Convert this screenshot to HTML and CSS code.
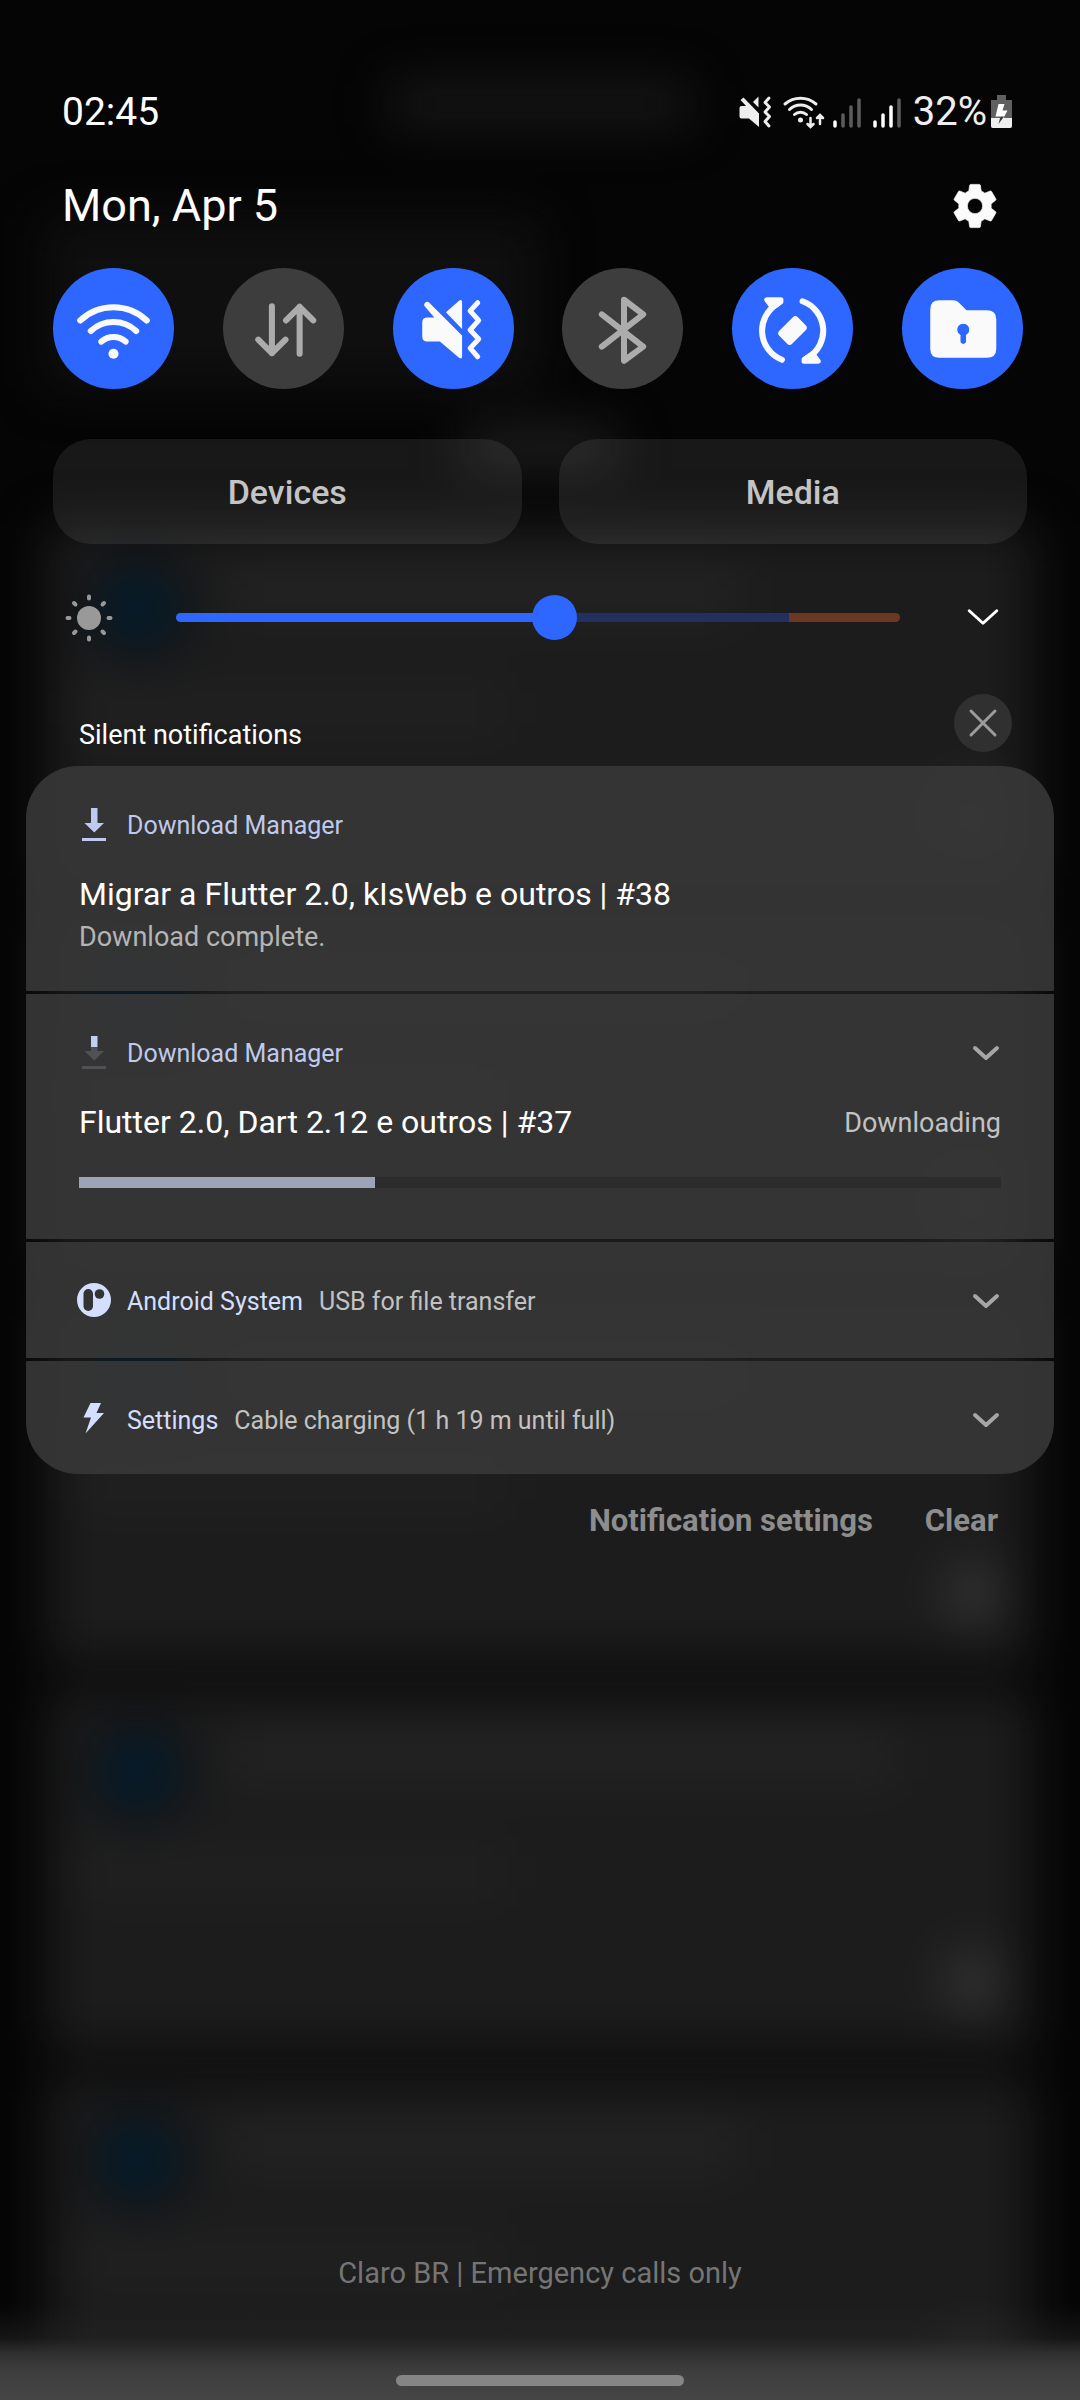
FILE: index.html
```html
<!DOCTYPE html>
<html lang="en">
<head>
<meta charset="utf-8">
<meta name="viewport" content="width=device-width, initial-scale=1">
<title>Notification shade</title>
<link rel="stylesheet" href="styles.css">
</head>
<body>
<svg class="defs" aria-hidden="true">
  <symbol id="chevron" viewBox="0 0 28 16" overflow="visible"><path d="M3 3 L14 13 L25 3" fill="none" stroke="currentColor" stroke-linecap="round" stroke-linejoin="round"/></symbol>
</svg>

<div class="backdrop" aria-hidden="true">
  <div class="bd-top"><div class="bd-title"></div><div class="bd-band"></div><div class="bd-pill"></div></div>
  <div class="bd-card"><div class="bd-head"><i class="bd-avatar"></i><i class="bd-line w60"></i></div><i class="bd-text"></i><i class="bd-dot"></i></div>
  <div class="bd-card"><div class="bd-head"><i class="bd-avatar"></i><i class="bd-line w60"></i></div><i class="bd-text"></i><i class="bd-dot"></i></div>
  <div class="bd-card"><div class="bd-head"><i class="bd-avatar"></i><i class="bd-line w60"></i></div><i class="bd-text"></i><i class="bd-dot"></i></div>
  <div class="bd-card"><div class="bd-head"><i class="bd-avatar"></i><i class="bd-line w80"></i></div><i class="bd-text"></i><i class="bd-dot"></i></div>
  <div class="bd-card"><div class="bd-head"><i class="bd-avatar"></i><i class="bd-line w60"></i></div><i class="bd-text"></i><i class="bd-dot"></i></div>
</div>

<div class="screen">
  <header class="status">
    <time class="clock">02:45</time>
    <div class="status-icons">
      <svg width="36" height="34" viewBox="0 0 36 34" aria-label="Vibrate" fill="#eee">
        <path d="M2.5 11 H7 L1.5 5 L4.5 2.5 L20 18.5 V32 L10 23.5 H2.5 Q.5 23.5 .5 21.500 V13 Q.5 11 2.500 11Z"/>
        <path d="M14 7 L19.500 1.500 V12.500Z"/>
        <path d="M30 3 L26 7.500 L30.500 12 L26 17 L30.500 21.500 L26 26.500 L30 31" fill="none" stroke="#eee" stroke-width="3" stroke-linecap="round" stroke-linejoin="round"/>
      </svg>
      <svg width="42" height="34" viewBox="0 0 42 34" aria-label="Wi-Fi" fill="none" stroke="#eee" stroke-width="3" stroke-linecap="round">
        <path d="M2 9 A24 24 0 0 1 33 9 M6.500 14.500 A16 16 0 0 1 28.500 14.500 M11.500 19.500 A9 9 0 0 1 23.500 19.500"/>
        <circle cx="17.500" cy="25" r="2.500" fill="#eee" stroke="none"/>
        <path d="M27.500 23 V31 M24.500 29 L27.500 32 L30.500 29 M37 29 V21 M34 23 L37 20 L40 23" stroke-width="2.500"/>
      </svg>
      <svg width="30" height="34" viewBox="0 0 30 34" aria-label="SIM 1 signal" stroke-width="3.500" stroke-linecap="round">
        <path d="M2 27 V31" stroke="#fff"/><path d="M10 20 V31 M18 12 V31 M26 5 V31" stroke="#5c5c5c"/>
      </svg>
      <svg width="34" height="34" viewBox="0 0 34 34" aria-label="SIM 2 signal" stroke-width="3.500" stroke-linecap="round">
        <path d="M4 27 V31 M12 20 V31 M20 12 V31" stroke="#fff"/><path d="M28 5 V31" stroke="#5c5c5c"/>
      </svg>
      <span class="battery"><span>32%</span>
      <svg width="21" height="34" viewBox="0 0 21 34" aria-label="Charging">
        <path d="M6 0 H15 V5 H21 V31 Q21 33 19 33 H2 Q0 33 0 31 V5 H6Z" fill="#606060"/>
        <path d="M0 23 H21 V31 Q21 33 19 33 H2 Q0 33 0 31Z" fill="#eee"/>
        <path d="M7.500 9 H13.500 L11.500 15.500 H16.500 L12.500 23 H9 L9.500 21.500 H4.500Z" fill="#fff"/>
        <path d="M9.500 21.500 H13 L7.500 29Z" fill="#333"/>
      </svg></span>
    </div>
  </header>

  <div class="date-row">
    <h1 class="date">Mon, Apr 5</h1>
    <button class="icon-btn gear" aria-label="Settings">
      <svg width="54" height="54" viewBox="0 0 24 24" fill="#fbfbfb" stroke="#fbfbfb" stroke-width=".3" stroke-linejoin="round"><path d="M19.140 12.940c.040-.300.060-.610.060-.940 0-.320-.020-.640-.070-.940l2.030-1.580c.180-.140.230-.410.120-.610l-1.920-3.320c-.120-.220-.370-.290-.590-.220l-2.390.960c-.500-.380-1.030-.700-1.620-.940L14.400 2.810c-.040-.240-.240-.410-.480-.410h-3.840c-.240 0-.430.170-.470.410L9.250 5.350c-.590.240-1.130.570-1.620.940L5.240 5.330c-.220-.080-.470 0-.590.220L2.740 8.870c-.120.210-.080.470.120.610l2.030 1.580c-.050.300-.090.630-.090.940s.020.640.070.940l-2.030 1.580c-.180.140-.230.410-.120.610l1.920 3.320c.120.220.370.290.590.220l2.390-.960c.500.380 1.030.700 1.620.940l.360 2.540c.050.240.240.410.480.410h3.840c.240 0 .440-.170.470-.410l.360-2.540c.590-.240 1.130-.560 1.620-.940l2.390.960c.220.080.470 0 .590-.220l1.920-3.320c.120-.220.070-.470-.120-.610l-2.010-1.580zM12 15.400a3.400 3.400 0 1 1 0-6.800 3.400 3.400 0 0 1 0 6.800z"/></svg>
    </button>
  </div>

  <nav class="toggles" aria-label="Quick settings">
    <button class="toggle on" aria-label="Wi-Fi" aria-pressed="true"><svg viewBox="0 0 120 120">
      <path class="line" d="M27 52 A48 48 0 0 1 93 52 M37.500 62.500 A33 33 0 0 1 82.500 62.500 M48 73 A18 18 0 0 1 72 73"/><circle cx="60" cy="85" r="5" fill="currentColor"/></svg></button>
    <button class="toggle" aria-label="Mobile data" aria-pressed="false"><svg viewBox="0 0 120 120">
      <path class="line" d="M48.500 38 V84.500 M35 71 L48.500 84.500 L62 71 M76 85 V38.500 M62.500 52 L76 38.500 L89.500 52"/></svg></button>
    <button class="toggle on" aria-label="Vibrate" aria-pressed="true"><svg viewBox="0 0 120 120">
      <path fill="currentColor" d="M34 49 H41 L31.800 38.500 A2.800 2.800 0 0 1 36 34.500 L68.500 67 V87.500 Q68.500 91 65.500 89 L46.500 73 H34 Q29 73 29 68 V54 Q29 49 34 49Z M52.500 44 L65.500 32.500 Q68.500 30.500 68.500 34 V60.500Z"/>
      <path class="line thin" d="M84 34.500 L76.500 42.500 L85 52 L76.500 61.500 L85 70.500 L76.500 79.500 L84 88"/></svg></button>
    <button class="toggle" aria-label="Bluetooth" aria-pressed="false"><svg viewBox="0 0 120 120">
      <path class="line" d="M39.500 46 L80.500 78 L61.500 92 V31.500 L80.500 46 L39.500 78"/></svg></button>
    <button class="toggle on" aria-label="Auto rotate" aria-pressed="true"><svg viewBox="0 0 120 120">
      <path class="line" d="M49.500 91 A31 31 0 0 1 45 35.500 M70 33 A31 31 0 0 1 75 89"/>
      <path d="M34.500 31.500 H48.500 V33.500 L40 39Z M85.500 92.500 H71.500 V90.500 L80 85Z" fill="currentColor" stroke="currentColor" stroke-width="5" stroke-linejoin="round"/>
      <rect x="47" y="53" width="26" height="18" rx="3.500" transform="rotate(-45 60 62)" fill="currentColor"/></svg></button>
    <button class="toggle on" aria-label="Secure Folder" aria-pressed="true"><svg viewBox="0 0 120 120">
      <path fill="currentColor" fill-rule="evenodd" d="M37 32 H51 Q54 32 56 34 L64 42 H84 Q93.500 42 93.500 51 V80 Q93.500 89 84 89 H37 Q28 89 28 80 V41 Q28 32 37 32Z M58 66.500 V72.500 A2.500 2.500 0 0 0 63.500 72.500 V66.500 A6 6 0 1 0 58 66.500Z"/></svg></button>
  </nav>

  <div class="panels">
    <button class="panel">Devices</button>
    <button class="panel">Media</button>
  </div>

  <div class="brightness">
    <svg width="48" height="48" viewBox="0 0 48 48" aria-hidden="true" stroke="#999" stroke-width="4" stroke-linecap="round">
      <circle cx="24" cy="25" r="12" fill="#999" stroke="none"/>
      <path d="M24 3.500 V5.500 M24 44.500 V46.500 M2.500 25 H4.500 M43.500 25 H45.500 M9 10 L10.500 11.500 M37.500 38.500 L39 40 M9 40 L10.500 38.500 M37.500 11.500 L39 10"/>
    </svg>
    <input class="slider" type="range" min="0" max="1000" value="525" aria-label="Brightness">
    <button class="icon-btn expand" aria-label="Brightness details"><svg width="36" height="20" viewBox="0 0 28 16"><use href="#chevron"/></svg></button>
  </div>

  <main class="shade">
    <div class="section-head">
      <h2>Silent notifications</h2>
      <button class="close" aria-label="Clear silent notifications"><svg width="58" height="58" viewBox="0 0 58 58"><path d="M17 17 L41 41 M41 17 L17 41" stroke="#9c9c9c" stroke-width="3" stroke-linecap="round"/></svg></button>
    </div>

    <div class="cards">
      <article class="note">
        <div class="note-head">
          <svg width="32" height="34" viewBox="0 1 32 34" fill="#bfcaf0"><path d="M12 1 H18.500 V16 H25 L15.300 25.500 L5.500 16 H12Z M3 31 H27 V34 H3Z"/></svg>
          <span class="app soft">Download Manager</span>
        </div>
        <h3>Migrar a Flutter 2.0, kIsWeb e outros | #38</h3>
        <p>Download complete.</p>
      </article>
      <article class="note">
        <div class="note-head">
          <svg width="32" height="34" viewBox="0 1 32 34"><path d="M12 12 H18.500 V16 H25 L15.300 25.500 L5.500 16 H12Z M3 31 H27 V34 H3Z" fill="#505157"/><path d="M12 1 H18.500 V12 H12Z" fill="#c3cef5"/></svg>
          <span class="app soft">Download Manager</span>
          <button class="icon-btn more" aria-label="Expand"><svg width="28" height="16"><use href="#chevron"/></svg></button>
        </div>
        <div class="title-row"><h3>Flutter 2.0, Dart 2.12 e outros | #37</h3><span class="state">Downloading</span></div>
        <div class="bar" role="progressbar" aria-valuenow="32" aria-valuemin="0" aria-valuemax="100" aria-label="Download progress"><div class="fill" style="width:32.1%"></div></div>
      </article>
      <article class="note">
        <div class="note-head">
          <svg width="32" height="34" viewBox="0 0 32 34"><circle cx="15" cy="16" r="17" fill="#d3dffd"/><rect x="4.500" y="5" width="9.500" height="22" rx="4.700" fill="#333"/><circle cx="20.500" cy="10" r="4.800" fill="#333"/></svg>
          <span class="app">Android System</span><span class="desc">USB for file transfer</span>
          <button class="icon-btn more" aria-label="Expand"><svg width="28" height="16"><use href="#chevron"/></svg></button>
        </div>
      </article>
      <article class="note">
        <div class="note-head">
          <svg width="32" height="34" viewBox="0 0 32 34"><path d="M11.500 0 H22 L17.500 10 H25 L6.500 30.500 L12 14.500 H4.500Z" fill="#d3dffd"/></svg>
          <span class="app">Settings</span><span class="desc">Cable charging (1 h 19 m until full)</span>
          <button class="icon-btn more" aria-label="Expand"><svg width="28" height="16"><use href="#chevron"/></svg></button>
        </div>
      </article>
    </div>

    <div class="actions">
      <button class="text-btn">Notification settings</button>
      <button class="text-btn">Clear</button>
    </div>
  </main>

  <footer class="bottom">
    <p class="carrier">Claro BR | Emergency calls only</p>
    <div class="home-bar"></div>
  </footer>
</div>
</body>
</html>
```
FILE: styles.css
```css
* { box-sizing: border-box; }

body {
  margin: 0;
  position: relative;
  background: #060506;
  color: #fff;
  font-family: Roboto, "Liberation Sans", sans-serif;
}

h1, h2, h3, p { margin: 0; font-weight: 400; }

button {
  margin: 0;
  padding: 0;
  border: 0;
  background: none;
  color: inherit;
  font: inherit;
  cursor: pointer;
}

svg { display: block; flex: none; overflow: visible; }

.defs { display: none; }

/* Blurred app behind the shade */
.backdrop {
  position: absolute;
  inset: 0;
  overflow: hidden;
  padding: 0 46px;
  filter: blur(24px);
}

.bd-top { height: 526px; padding-top: 82px; }
.bd-title { width: 300px; height: 44px; margin: 0 auto 92px; background: #171717; }
.bd-band { width: 50%; height: 170px; background: #0f0f0f; }
.bd-pill { width: 150px; height: 44px; margin: 38px auto 0; background: #1d1d1d; }

.bd-card {
  display: flex;
  flex-direction: column;
  height: 362px;
  margin-bottom: 26px;
  padding: 40px 36px 40px 30px;
  background: #1c1c1c;
}
.bd-head { display: flex; gap: 54px; margin-bottom: 42px; }
.bd-avatar { width: 76px; height: 76px; margin: 4px 0 0 24px; border-radius: 50%; background: #051d2e; box-shadow: 0 0 0 18px #101112; }
.bd-line { height: 50px; margin-top: 2px; background: #232323; }
.w60 { width: 55%; }
.w80 { width: 72%; }
.bd-text { width: 430px; height: 40px; background: #212121; }
.bd-dot { width: 52px; height: 62px; margin: auto 0 0 auto; border-radius: 50%; background: #353535; }

.screen {
  position: relative;
  display: flex;
  flex-direction: column;
  min-height: 100vh;
  padding-top: 88px;
  background: linear-gradient(to top, #454545 0, #3e3e3e 28px, #303030 46px, rgba(36, 36, 36, .5) 62px, rgba(20, 20, 20, 0) 96px);
}

.status, .date-row { display: flex; justify-content: space-between; align-items: center; }
.status { height: 48px; padding: 0 68px 0 62px; font-size: 40px; line-height: 48px; }
.clock { font-size: 39px; }
.status-icons { display: flex; align-items: center; gap: 8px; color: #eee; }
.battery { display: flex; align-items: center; gap: 4px; }

.date-row { height: 54px; margin-top: 43px; padding: 0 78px 0 62px; }
.date { font-size: 45px; line-height: 54px; }

.icon-btn { display: grid; place-items: center; }

.toggles { display: flex; justify-content: space-between; margin-top: 35px; padding: 0 57px 0 53px; }
.toggle { width: 121px; height: 121px; border-radius: 50%; background: #3d3d3d; color: #acacac; }
.toggle.on { background: #2d67ff; color: #fafafa; }
.line { fill: none; stroke: currentColor; stroke-width: 6; stroke-linecap: round; stroke-linejoin: round; }
.thin { stroke-width: 5; }

.panels { display: flex; gap: 37px; margin-top: 50px; padding: 0 53px; }
.panel {
  flex: 1;
  height: 105px;
  border-radius: 38px;
  background: rgba(255, 255, 255, .08);
  color: #c4c4c4;
  font-size: 34px;
  font-weight: 500;
  line-height: 40px;
}

.brightness { display: flex; align-items: center; height: 46px; margin-top: 50px; padding: 0 79px 0 65px; }
.slider {
  appearance: none;
  flex: 1;
  height: 46px;
  margin: 0 65px 0 63px;
  background: none;
}
.slider::-webkit-slider-runnable-track {
  height: 9px;
  border-radius: 5px;
  background: linear-gradient(to right, #2d67ff 52%, #22305f 52%, #22305f 84.6%, #6b3824 84.6%);
}
.slider::-webkit-slider-thumb {
  appearance: none;
  width: 45px;
  height: 45px;
  margin-top: -18px;
  border-radius: 50%;
  background: #2d67ff;
}
.expand { stroke-width: 2.4; }

.shade { margin-top: 54px; padding: 0 26px; }
.section-head { display: flex; justify-content: space-between; align-items: flex-end; padding: 0 42px 0 53px; }
.section-head h2 { font-size: 27px; line-height: 34px; }
.close { border-radius: 50%; background: #303030; }

.cards { display: grid; gap: 3px; margin-top: 14px; overflow: hidden; border-radius: 52px; }
.note { padding: 41px 53px 39px; background: rgba(55, 55, 55, .9); }
.note:nth-child(1) { padding-bottom: 36px; }
.note:nth-child(2) { padding-bottom: 51px; }
.note:last-child { padding-bottom: 36px; }
.note-head { display: flex; align-items: center; height: 36px; font-size: 25px; line-height: 34px; }
.app, .desc, .state { padding-top: 2px; }
.app { margin-left: 16px; color: #d3dffd; }
.app.soft { color: #bfc9eb; }
.desc { margin-left: 16px; color: #c2c2c2; }
.more { margin: 0 1px 0 auto; color: #a6a6a6; stroke-width: 4; }
.note h3 { font-size: 32px; line-height: 40px; }
.note > h3, .title-row { margin-top: 31px; }
.note p { margin-top: 5px; color: #b5b5b5; font-size: 27px; line-height: 36px; }
.title-row { display: flex; justify-content: space-between; align-items: center; }
.state { color: #c2c2c2; font-size: 27px; line-height: 36px; }
.bar { height: 11px; margin-top: 35px; background: #2c2c2c; }
.fill { height: 100%; background: #9ea4b8; }

.actions { display: flex; justify-content: flex-end; gap: 52px; margin-top: 27px; padding-right: 56px; }
.text-btn { color: #8d8d8d; font-size: 31px; font-weight: 700; line-height: 40px; }

.bottom { display: grid; justify-items: center; margin-top: auto; padding-bottom: 14px; }
.carrier { color: #757575; font-size: 29px; line-height: 36px; }
.home-bar { width: 288px; height: 11px; margin-top: 84px; border-radius: 6px; background: #858585; }
```
